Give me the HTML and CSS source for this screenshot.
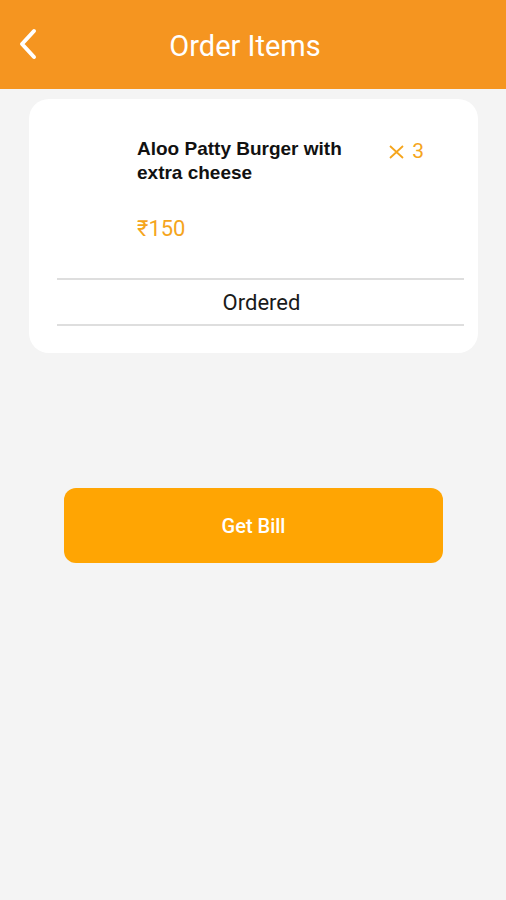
FILE: index.html
```html
<!DOCTYPE html>
<html lang="en">
<head>
<meta charset="utf-8">
<title>Order Items</title>
<link rel="stylesheet" href="styles.css">
</head>
<body>
<header class="topbar">
  <svg class="back" width="22" height="32" viewBox="0 0 22 32" aria-hidden="true">
    <polyline points="17,3 5,16 17,29" fill="none" stroke="#fff" stroke-width="4" stroke-linecap="round" stroke-linejoin="round"/>
  </svg>
  <h1 class="title">Order Items</h1>
</header>
<main class="content">
  <section class="card">
    <div class="item">
      <div class="info">
        <div class="name">Aloo Patty Burger with extra cheese</div>
        <div class="price">₹150</div>
      </div>
      <div class="qty">
        <svg class="times" width="15" height="14" viewBox="0 0 15 14" aria-hidden="true">
          <path d="M1 1 L14 13 M14 1 L1 13" stroke="#f5a51c" stroke-width="1.8" fill="none"/>
        </svg>
        <span>3</span>
      </div>
    </div>
    <div class="status">Ordered</div>
  </section>
  <button class="bill">Get Bill</button>
</main>
</body>
</html>
```
FILE: styles.css
```css
* { box-sizing: border-box; }
html, body { margin: 0; padding: 0; }
body {
  background: #f4f4f4;
  font-family: Roboto, "Liberation Sans", Arial, sans-serif;
  width: 506px;
  min-height: 900px;
}
.topbar {
  height: 89px;
  background: #f59520;
  display: flex;
  align-items: center;
  position: relative;
  padding-left: 17px;
}
.back { display: block; margin-top: -2px; }
.title {
  margin: 0;
  position: absolute;
  left: 0;
  right: 16px;
  top: 27px;
  text-align: center;
  font-weight: 400;
  font-size: 29px;
  line-height: 38px;
  color: #fff;
  pointer-events: none;
}
.content { display: flex; flex-direction: column; }
.card {
  margin: 10px 28px 0 29px;
  background: #fff;
  border-radius: 20px;
  padding: 38px 14px 27px 28px;
}
.item {
  display: flex;
  padding-left: 80px;
  padding-bottom: 37px;
}
.info { flex: 1; }
.name {
  font-family: "Liberation Sans", Arial, sans-serif;
  font-weight: 700;
  font-size: 19px;
  line-height: 24px;
  color: #111;
  width: 235px;
}
.price {
  margin-top: 32px;
  font-size: 22px;
  line-height: 24px;
  color: #f5a51c;
}
.qty {
  display: flex;
  align-items: center;
  gap: 8px;
  height: 24px;
  font-size: 21px;
  line-height: 24px;
  color: #f5a51c;
  margin-right: 40px;
  margin-top: 2px;
  white-space: nowrap;
}
.times { display: block; margin-top: 2px; }
.status {
  border-top: 2px solid #dedede;
  border-bottom: 2px solid #dedede;
  height: 48px;
  display: flex;
  align-items: center;
  justify-content: center;
  font-size: 22px;
  color: #1a1a1a;
  padding-left: 2px;
}
.bill {
  margin: 135px 0 0 64px;
  width: 379px;
  height: 75px;
  border: none;
  border-radius: 12px;
  background: #ffa503;
  color: #fff;
  font-family: Roboto, "Liberation Sans", Arial, sans-serif;
  font-size: 20px;
  font-weight: 500;
}
```
